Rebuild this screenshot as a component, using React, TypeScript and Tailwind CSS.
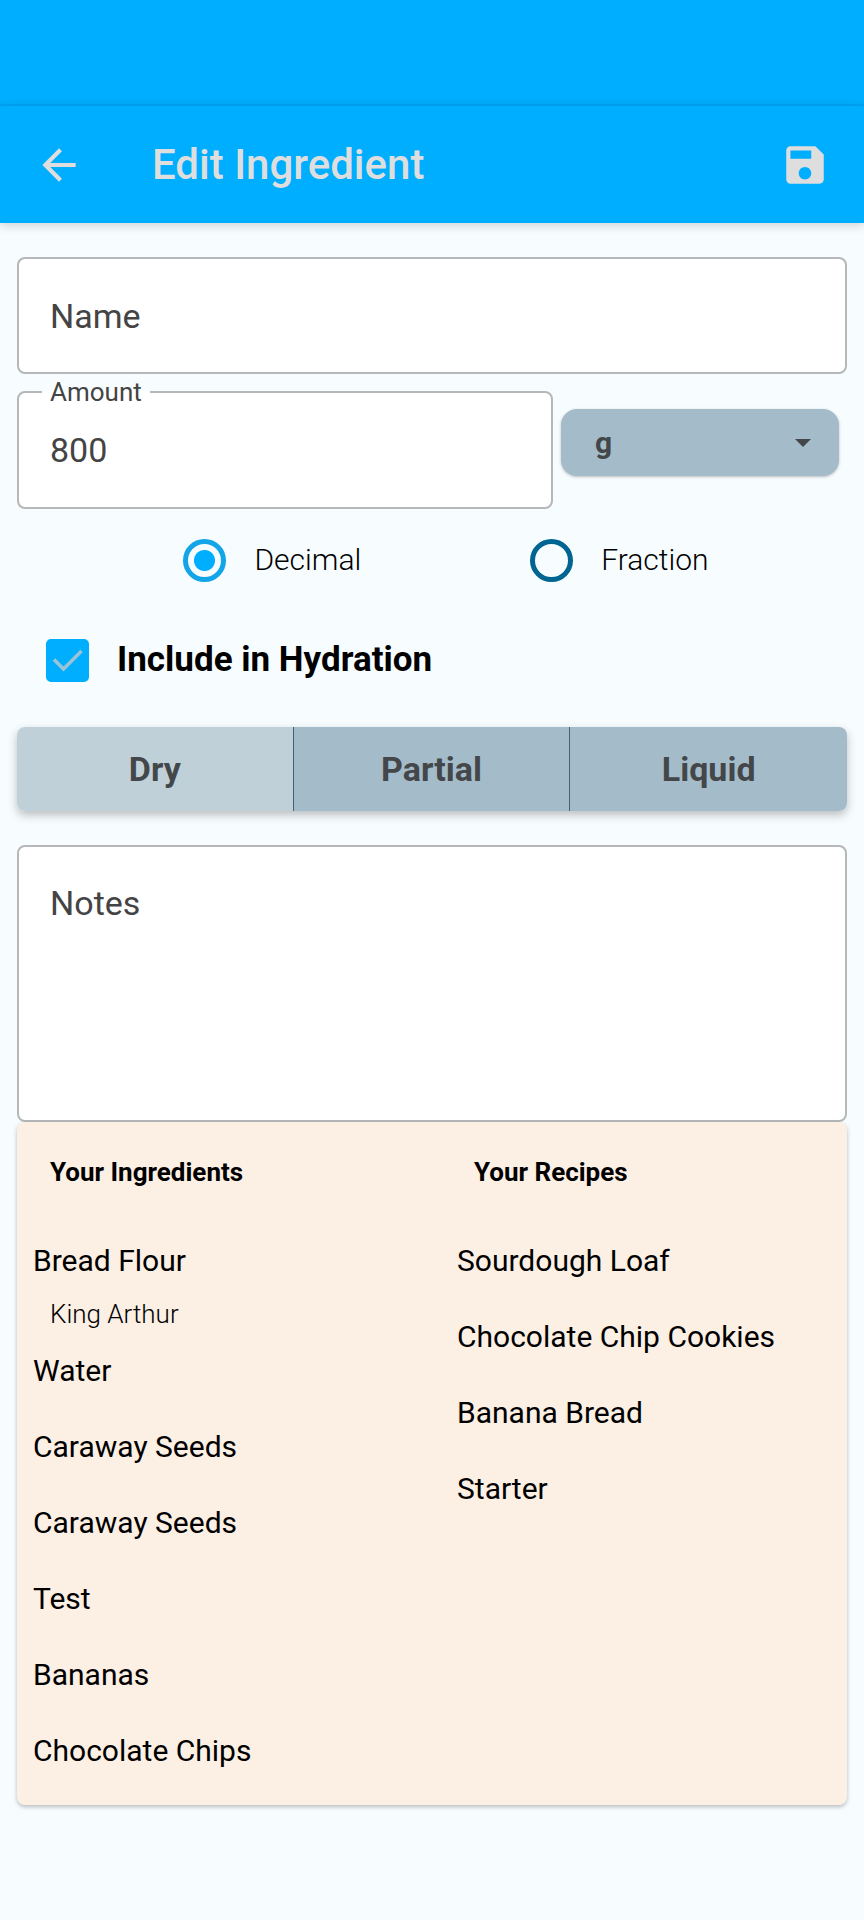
import { useState } from 'react';
import { MdArrowBack, MdSave } from 'react-icons/md';

type Ingredient = { name: string; brand?: string };

const ingredients: Ingredient[] = [
    { name: 'Bread Flour', brand: 'King Arthur' },
    { name: 'Water' },
    { name: 'Caraway Seeds' },
    { name: 'Caraway Seeds' },
    { name: 'Test' },
    { name: 'Bananas' },
    { name: 'Chocolate Chips' },
];

const recipes = ['Sourdough Loaf', 'Chocolate Chip Cookies', 'Banana Bread', 'Starter'];

const ingredientTypes = ['Dry', 'Partial', 'Liquid'];

export default function App() {
    const [name, setName] = useState('');
    const [amount, setAmount] = useState('800');
    const [unit, setUnit] = useState('g');
    const [format, setFormat] = useState('Decimal');
    const [hydration, setHydration] = useState(true);
    const [type, setType] = useState('Dry');
    const [notes, setNotes] = useState('');

    return (
        <div className="min-h-screen bg-[#f7fcff] font-['Roboto',sans-serif] text-black">
            {/* Status bar area */}
            <div className="h-[106px] border-b-2 border-[#00a5fa] bg-[#00aeff]" />
            <header className="flex h-[117px] items-center bg-[#00aeff] px-[34px] text-[#dedede] shadow-[0_2px_10px_rgba(0,0,0,0.18)]">
                <button type="button" aria-label="Back">
                    <MdArrowBack className="size-[50px]" />
                </button>
                <h1 className="ml-[68px] flex-1 text-[42px] leading-[50px] font-medium">Edit Ingredient</h1>
                <button type="button" aria-label="Save">
                    <MdSave className="size-[50px]" />
                </button>
            </header>

            <main className="px-[17px] pt-[34px] pb-[114px]">
                <form onSubmit={e => e.preventDefault()}>
                    <input
                        type="text"
                        aria-label="Name"
                        placeholder="Name"
                        value={name}
                        onChange={e => setName(e.target.value)}
                        className="block h-[117px] w-full rounded-lg border-2 border-[#b5b7b8] bg-white px-[31px] text-[34px] text-[#444444] outline-none placeholder:text-[#444444]"
                    />

                    <div className="mt-[3px] flex items-start gap-2">
                        <fieldset className="min-w-0 flex-1 rounded-lg border-2 border-[#b5b7b8] bg-white">
                            <legend className="ml-[23px] px-2 text-[26px] leading-[30px] text-[#444444]">
                                <label htmlFor="amount">Amount</label>
                            </legend>
                            <input
                                id="amount"
                                type="text"
                                inputMode="decimal"
                                value={amount}
                                onChange={e => setAmount(e.target.value)}
                                className="mb-[14px] block h-[86px] w-full px-[31px] text-[34px] text-[#444444] outline-none"
                            />
                        </fieldset>
                        <div className="relative mt-8 mr-2 w-[278px]">
                            <select
                                aria-label="Unit"
                                value={unit}
                                onChange={e => setUnit(e.target.value)}
                                className="block h-[67px] w-full appearance-none rounded-2xl bg-[#a4bcca] px-[34px] text-[30px] font-bold text-[#444749] shadow-[0_1px_3px_rgba(0,0,0,0.25)] outline-none"
                            >
                                <option>g</option>
                                <option>oz</option>
                                <option>cup</option>
                            </select>
                            <svg viewBox="0 0 16 8" className="pointer-events-none absolute top-[30px] right-7 h-2 w-4 fill-[#444749]">
                                <path d="M0 0h16L8 8z" />
                            </svg>
                        </div>
                    </div>

                    <div className="flex justify-center gap-[169px] pt-7 pl-7">
                        {['Decimal', 'Fraction'].map(option => (
                            <label key={option} className="flex items-center gap-7 text-[30px] leading-[46px] font-light">
                                <input
                                    type="radio"
                                    name="format"
                                    checked={format === option}
                                    onChange={() => setFormat(option)}
                                    className="size-[43px] appearance-none rounded-full border-[5px] border-[#006591] checked:border-[#12a5e8] checked:bg-[radial-gradient(circle,#00aeff_10px,transparent_11px)]"
                                />
                                {option}
                            </label>
                        ))}
                    </div>

                    <label className="mt-[54px] ml-[29px] flex items-center gap-7 text-[35px] leading-[46px] font-bold">
                        <span className="relative block size-[43px]">
                            <input
                                type="checkbox"
                                checked={hydration}
                                onChange={e => setHydration(e.target.checked)}
                                className="block size-[43px] appearance-none rounded-[5px] border-4 border-[#006591] checked:border-[#00aeff] checked:bg-[#00aeff]"
                            />
                            {hydration && (
                                <svg viewBox="0 0 43 43" className="pointer-events-none absolute inset-0 size-full fill-none stroke-[#9cc4d8] stroke-[3.5]">
                                    <path d="M8 20.5 17.5 30 35.5 12" />
                                </svg>
                            )}
                        </span>
                        Include in Hydration
                    </label>

                    <div className="mt-11 grid grid-cols-3 divide-x divide-[#45606e] overflow-hidden rounded-lg shadow-[0_4px_10px_rgba(0,0,0,0.25)]">
                        {ingredientTypes.map(t => (
                            <button
                                key={t}
                                type="button"
                                aria-pressed={type === t}
                                onClick={() => setType(t)}
                                className={`h-[84px] text-[34px] font-bold text-[#444749] ${type === t ? 'bg-[#c0d0d9]' : 'bg-[#a4bcca]'}`}
                            >
                                {t}
                            </button>
                        ))}
                    </div>

                    <textarea
                        aria-label="Notes"
                        placeholder="Notes"
                        value={notes}
                        onChange={e => setNotes(e.target.value)}
                        className="mt-[34px] block h-[277px] w-full resize-none rounded-lg border-2 border-[#b5b7b8] bg-white px-[31px] py-[35px] text-[34px] leading-[42px] text-[#444444] outline-none placeholder:text-[#444444]"
                    />
                </form>

                <div className="grid grid-cols-2 gap-4 rounded-lg bg-[#fcefe4] pt-[35px] pb-4 shadow-[0_2px_4px_rgba(0,0,0,0.25)]">
                    <section className="pl-4">
                        <h2 className="pl-[17px] text-[26px] leading-[30px] font-bold">Your Ingredients</h2>
                        <ul className="mt-9 text-[30px]">
                            {ingredients.map((item, i) => (
                                <li key={i}>
                                    <p className={item.brand ? 'pt-[18px] leading-10' : 'py-[18px] leading-10'}>{item.name}</p>
                                    {item.brand && <p className="mt-[15px] pl-[17px] text-[26px] leading-[37px] font-light">{item.brand}</p>}
                                </li>
                            ))}
                        </ul>
                    </section>
                    <section className="pl-[17px]">
                        <h2 className="pl-[17px] text-[26px] leading-[30px] font-bold">Your Recipes</h2>
                        <ul className="mt-9 text-[30px]">
                            {recipes.map(recipe => (
                                <li key={recipe} className="py-[18px] leading-10">{recipe}</li>
                            ))}
                        </ul>
                    </section>
                </div>
            </main>
        </div>
    );
}
